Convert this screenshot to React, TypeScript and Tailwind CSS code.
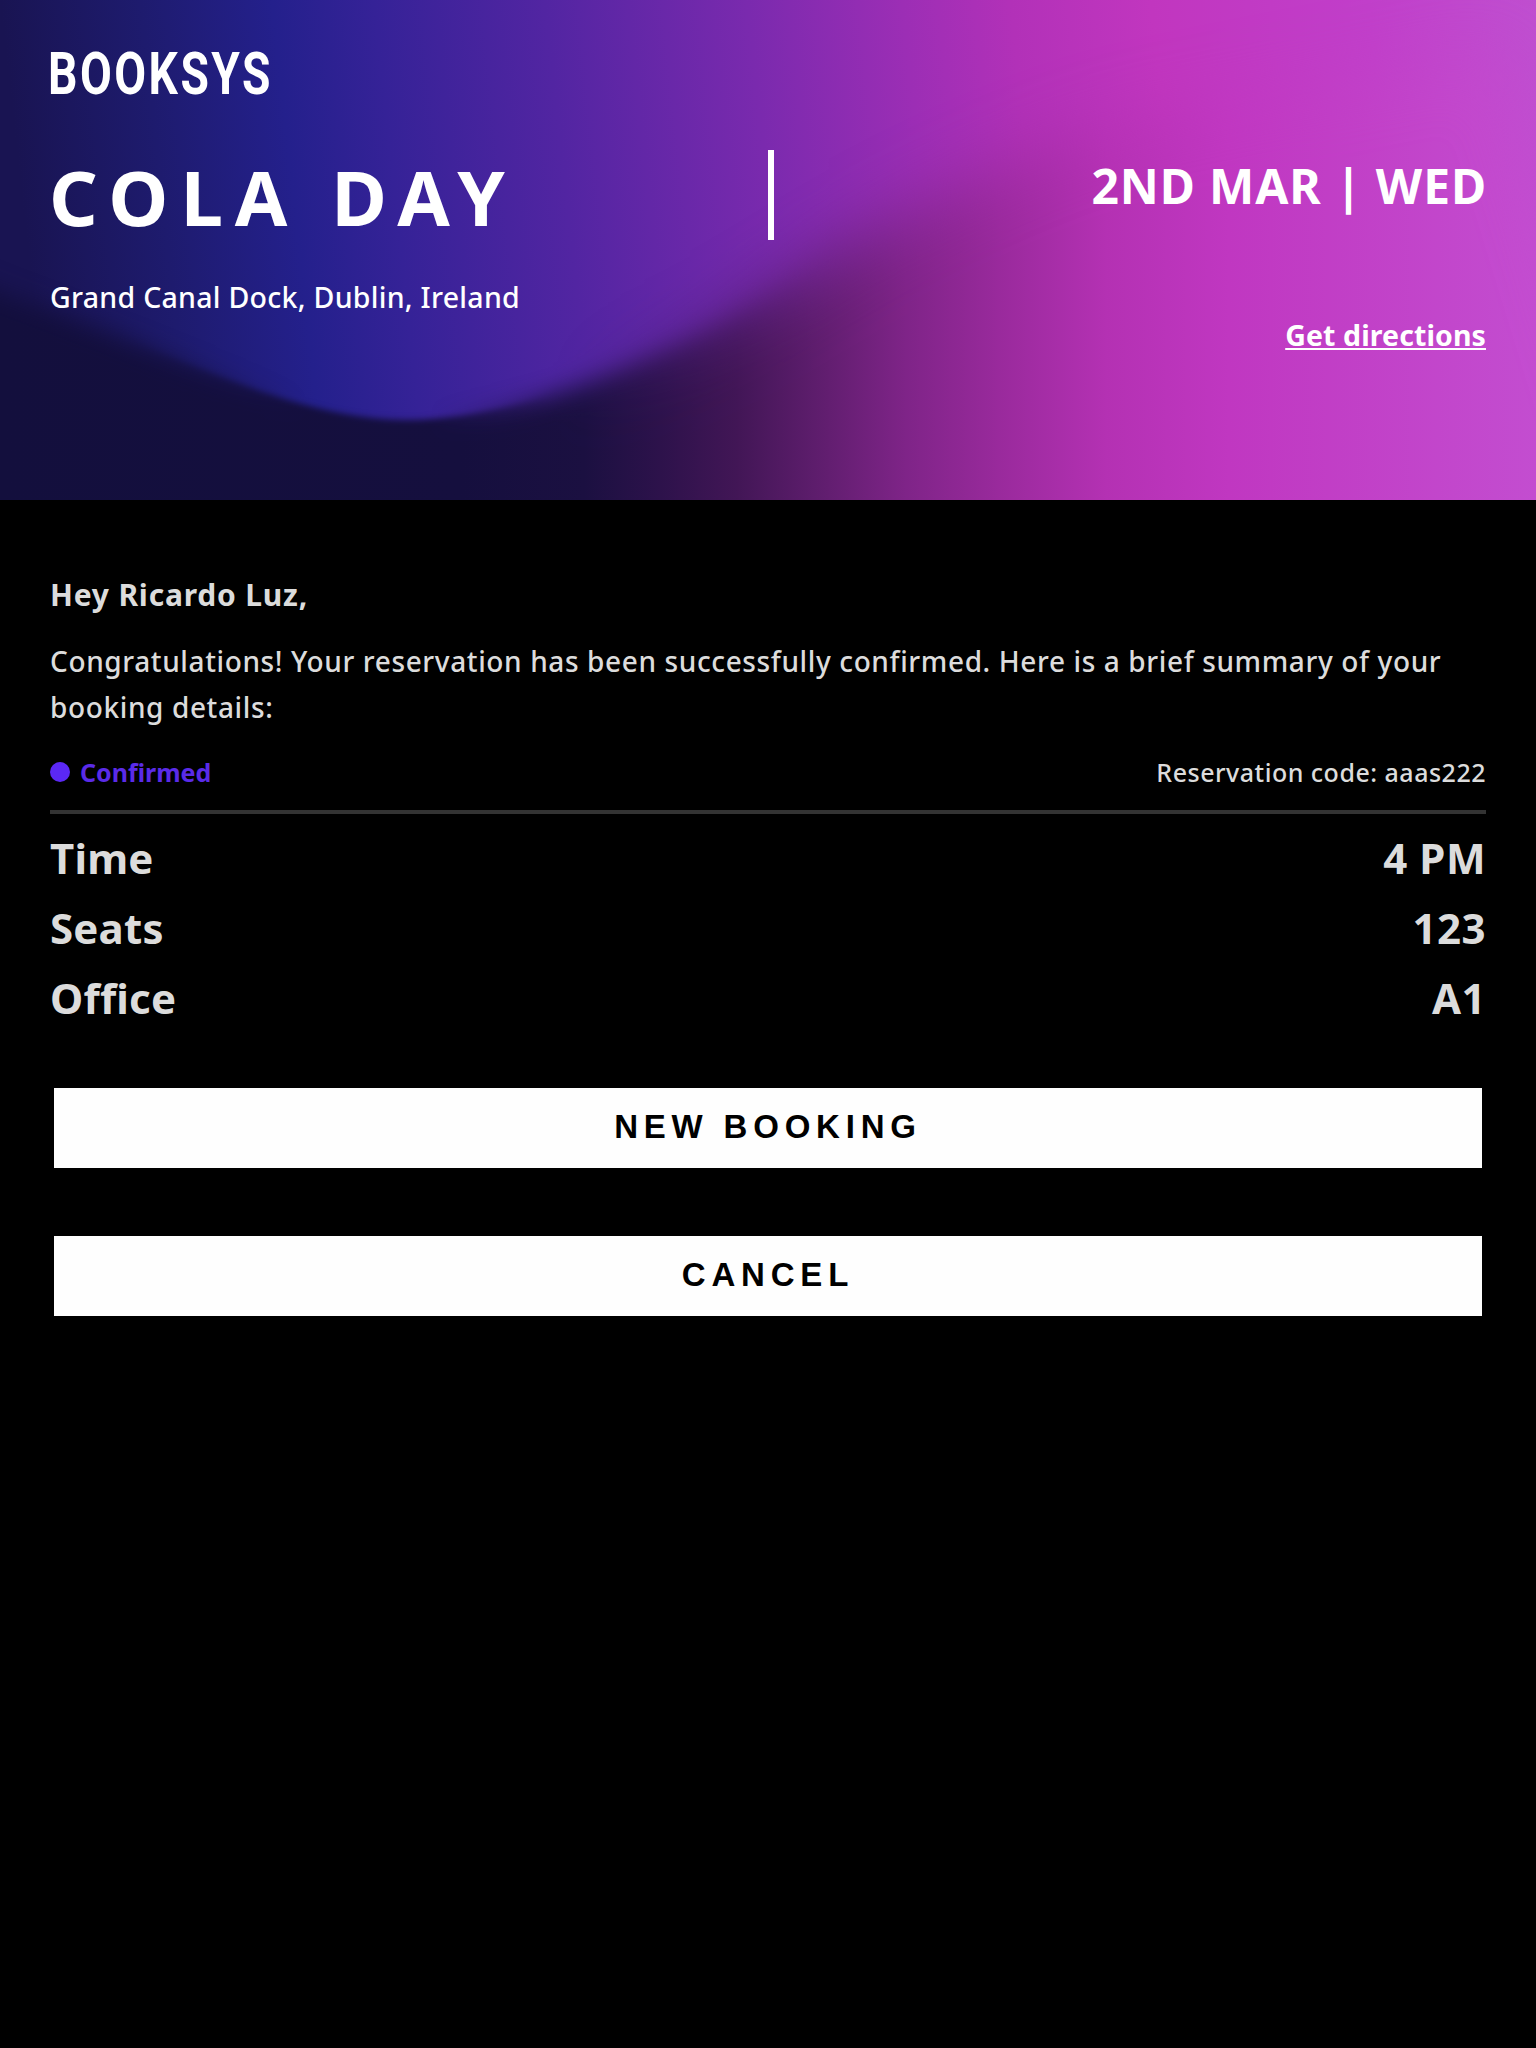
import React from 'react';

const details = [
  { label: 'Time', value: '4 PM' },
  { label: 'Seats', value: '123' },
  { label: 'Office', value: 'A1' },
];

/** Decorative wave behind the event header: sharp at the trough, hazy to the right. */
function WaveBackdrop() {
  const shape =
    'M-120 242 L0 292 C60 314 120 336 196 367 C260 392 330 419 407 420 C470 420 540 400 588 383 C650 358 700 336 750 306 C830 258 890 220 980 180 C1040 154 1090 134 1150 120 L1500 50 L1700 700 L-120 700 Z';
  return (
    <svg
      className="absolute inset-0 h-full w-full"
      viewBox="0 0 1536 500"
      preserveAspectRatio="none"
      aria-hidden="true"
    >
      <defs>
        <linearGradient id="sky" gradientUnits="userSpaceOnUse" x1="0" y1="0" x2="1536" y2="-170">
          <stop offset="0" stopColor="#191452" />
          <stop offset="0.09" stopColor="#1e1b6e" />
          <stop offset="0.175" stopColor="#24208c" />
          <stop offset="0.24" stopColor="#352297" />
          <stop offset="0.35" stopColor="#5225a2" />
          <stop offset="0.48" stopColor="#7a2aae" />
          <stop offset="0.58" stopColor="#9c2eb5" />
          <stop offset="0.65" stopColor="#b231b8" />
          <stop offset="0.74" stopColor="#c136bf" />
          <stop offset="0.88" stopColor="#c13fca" />
          <stop offset="1" stopColor="#bf51d1" />
        </linearGradient>
        <linearGradient id="sea" gradientUnits="userSpaceOnUse" x1="0" y1="0" x2="1536" y2="0">
          <stop offset="0" stopColor="#130f3d" />
          <stop offset="0.3" stopColor="#150f3e" />
          <stop offset="0.38" stopColor="#1b1041" />
          <stop offset="0.43" stopColor="#2d124b" />
          <stop offset="0.48" stopColor="#421656" />
          <stop offset="0.53" stopColor="#5d1d6c" />
          <stop offset="0.59" stopColor="#7f2488" />
          <stop offset="0.65" stopColor="#992a9c" />
          <stop offset="0.72" stopColor="#b431b3" />
          <stop offset="0.8" stopColor="#c037c1" />
          <stop offset="1" stopColor="#c34dd0" />
        </linearGradient>
        <linearGradient id="crispFade" gradientUnits="userSpaceOnUse" x1="0" y1="0" x2="1536" y2="0">
          <stop offset="0.08" stopColor="#000" />
          <stop offset="0.2" stopColor="#fff" />
          <stop offset="0.28" stopColor="#fff" />
          <stop offset="0.36" stopColor="#000" />
        </linearGradient>
        <linearGradient id="softFade" gradientUnits="userSpaceOnUse" x1="0" y1="0" x2="1536" y2="0">
          <stop offset="0.36" stopColor="#fff" />
          <stop offset="0.54" stopColor="#000" />
        </linearGradient>
        <filter id="blurCrisp" x="-20%" y="-40%" width="140%" height="180%" colorInterpolationFilters="sRGB">
          <feGaussianBlur stdDeviation="3" />
        </filter>
        <filter id="blurSoft" x="-20%" y="-40%" width="140%" height="180%" colorInterpolationFilters="sRGB">
          <feGaussianBlur stdDeviation="12" />
        </filter>
        <filter id="blurHaze" x="-20%" y="-40%" width="140%" height="180%" colorInterpolationFilters="sRGB">
          <feGaussianBlur stdDeviation="34" />
        </filter>
        <mask id="maskCrisp" maskUnits="userSpaceOnUse" x="0" y="0" width="1536" height="500">
          <rect width="1536" height="500" fill="url(#crispFade)" />
        </mask>
        <mask id="maskSoft" maskUnits="userSpaceOnUse" x="0" y="0" width="1536" height="500">
          <rect width="1536" height="500" fill="url(#softFade)" />
        </mask>
        <mask id="wave" maskUnits="userSpaceOnUse" x="0" y="0" width="1536" height="500">
          <rect width="1536" height="500" fill="#000" />
          <path d={shape} fill="#fff" filter="url(#blurHaze)" />
          <g mask="url(#maskSoft)">
            <rect width="1536" height="500" fill="#000" />
            <path d={shape} fill="#fff" filter="url(#blurSoft)" />
          </g>
          <g mask="url(#maskCrisp)">
            <rect width="1536" height="500" fill="#000" />
            <path d={shape} fill="#fff" filter="url(#blurCrisp)" />
          </g>
        </mask>
      </defs>
      <rect width="1536" height="500" fill="url(#sky)" />
      <rect width="1536" height="500" fill="url(#sea)" mask="url(#wave)" />
    </svg>
  );
}

function ActionButton({ children }: { children: React.ReactNode }) {
  return (
    <button
      type="button"
      className="flex h-20 w-full items-center justify-center bg-[#fefefe] pb-[3px] font-['Liberation_Sans',Arial,sans-serif] text-[33px] font-bold tracking-[5.8px] text-black"
    >
      {children}
    </button>
  );
}

export default function App() {
  return (
    <div className="min-h-[2048px] bg-black font-['Noto_Sans',sans-serif] font-medium text-[#dcdcdc]">
      <header className="relative h-[500px] overflow-hidden text-white">
        <WaveBackdrop />
        <div className="relative flex h-full flex-col px-[50px] pt-11">
          <div className="-ml-[2px] h-[60px] w-fit origin-left scale-x-[0.77] font-[Roboto,sans-serif] text-[60px] leading-[60px] font-bold tracking-[3.2px] whitespace-nowrap">
            BOOKSYS
          </div>
          <div className="mt-[46px] grid grid-cols-[718px_6px_712px]">
            <div>
              <h1 className="mt-0.5 -ml-px text-[76px] leading-[90px] font-bold tracking-[12px] whitespace-nowrap">
                COLA DAY
              </h1>
              <p className="mt-[35px] text-[28.5px] leading-10 tracking-[0.28px]">
                Grand Canal Dock, Dublin, Ireland
              </p>
            </div>
            <div className="h-[90px] bg-white" />
            <div className="flex flex-col items-end">
              <p className="mt-1.5 -mr-px text-[48px] leading-[60px] font-bold tracking-[0.9px] whitespace-nowrap">
                2ND MAR | WED
              </p>
              <a
                href="#"
                className="mt-[99px] text-[28.5px] leading-10 font-bold tracking-[0.1px] underline decoration-2 underline-offset-[2px]"
              >
                Get directions
              </a>
            </div>
          </div>
        </div>
      </header>

      <main className="px-[50px] pt-[75px]">
        <h2 className="text-[30px] leading-10 font-bold tracking-[0.8px]">Hey Ricardo Luz,</h2>
        <p className="mt-[23px] text-[28px] leading-[46px] tracking-[0.62px]">
          Congratulations! Your reservation has been successfully confirmed. Here is a brief summary
          of your booking details:
        </p>
        <div className="mt-[25px] flex h-[34px] items-center justify-between text-[25px] leading-[34px]">
          <div className="flex items-center gap-2.5 font-bold text-[#5a2be8]">
            <span className="size-5 rounded-full bg-[#5b28f5]" />
            <span>Confirmed</span>
          </div>
          <span className="tracking-[0.5px]">Reservation code: aaas222</span>
        </div>
        <hr className="mt-[21px] h-1 border-0 bg-[#333333]" />
        <dl className="mt-[9px] text-[42px] leading-[70px] font-bold">
          {details.map(({ label, value }) => (
            <div key={label} className="flex justify-between">
              <dt className="tracking-[0.2px]">{label}</dt>
              <dd className="tracking-[0.5px]">{value}</dd>
            </div>
          ))}
        </dl>
        <div className="mt-[55px] flex flex-col gap-[68px] px-1">
          <ActionButton>NEW BOOKING</ActionButton>
          <ActionButton>CANCEL</ActionButton>
        </div>
      </main>
    </div>
  );
}
